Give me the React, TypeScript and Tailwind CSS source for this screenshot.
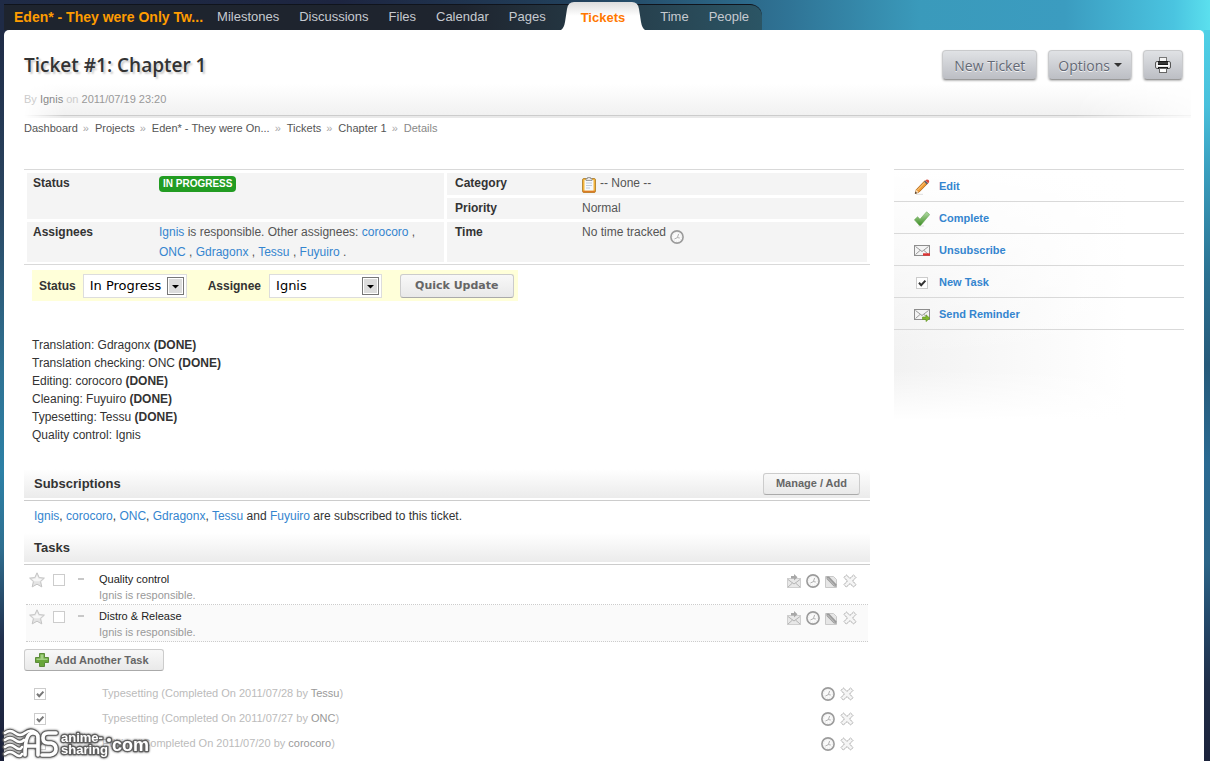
import { useState } from 'react';
import type { ReactNode } from 'react';

const NAV_BEFORE = ['Milestones', 'Discussions', 'Files', 'Calendar', 'Pages'];
const NAV_AFTER = ['Time', 'People'];

const CRUMBS = ['Dashboard', 'Projects', 'Eden* - They were On...', 'Tickets', 'Chapter 1'];

const PROGRESS = [
  { step: 'Translation', who: 'Gdragonx', done: true },
  { step: 'Translation checking', who: 'ONC', done: true },
  { step: 'Editing', who: 'corocoro', done: true },
  { step: 'Cleaning', who: 'Fuyuiro', done: true },
  { step: 'Typesetting', who: 'Tessu', done: true },
  { step: 'Quality control', who: 'Ignis', done: false },
];

const OPEN_TASKS = ['Quality control', 'Distro & Release'];

const COMPLETED_TASKS = [
  { name: 'Typesetting', date: '2011/07/28', by: 'Tessu' },
  { name: 'Typesetting', date: '2011/07/27', by: 'ONC' },
  { name: 'Editing', date: '2011/07/20', by: 'corocoro' },
];

/* ---------- Icons ---------- */

function ClockIcon() {
  return (
    <svg width="14" height="14" viewBox="0 0 14 14" className="block">
      <circle cx="7" cy="7" r="6.1" fill="#fafafa" stroke="#9b9b9b" strokeWidth="1.6" />
      <circle cx="7" cy="7" r="4.4" fill="none" stroke="#dcdcdc" strokeWidth=".8" strokeDasharray="1 1.3" />
      <path d="M8.6 4L7.4 7.6L4.4 9M7.4 7.6L9.8 8" fill="none" stroke="#b0b0b0" />
    </svg>
  );
}

function CrossIcon() {
  return (
    <svg width="14" height="14" viewBox="0 0 14 14" className="block">
      <path
        d="M3.4 1L7 4.4L10.6 1L13 3.4L9.6 7L13 10.6L10.6 13L7 9.6L3.4 13L1 10.6L4.4 7L1 3.4Z"
        fill="#f5f5f5"
        stroke="#a8a8a8"
        strokeWidth="1"
        strokeDasharray="2 .4"
        strokeLinejoin="round"
      />
    </svg>
  );
}

function InboxIcon() {
  return (
    <svg width="14" height="14" viewBox="0 0 14 14" className="block">
      <rect x=".5" y="4.5" width="13" height="9" fill="#e8e8e8" stroke="#cfcfcf" />
      <path d="M1 13L5.5 9M13 13L8.5 9M1 5.5L7 10L13 5.5" fill="none" stroke="#b5b5b5" />
      <path d="M4 2H7V0L10.5 3.2L7 6.5V4.5H4Z" fill="#a8a8a8" />
    </svg>
  );
}

function NoteIcon() {
  return (
    <svg width="13" height="13" viewBox="0 0 13 13" className="block">
      <path d="M.5 1.5H8.5L11.5 4.5V12.5H.5Z" fill="#e6e6e6" stroke="#c9c9c9" />
      <path d="M1.4 1.6L4 1.4L11.4 9.2L11.4 11.8L9 11.4L1.6 4Z" fill="#9a9a9a" />
      <path d="M2.6 3L9.8 10.6" stroke="#d0d0d0" strokeWidth=".8" />
    </svg>
  );
}

function StarIcon() {
  return (
    <svg width="16" height="16" viewBox="0 0 16 16" className="block">
      <path
        d="M8 .8L10.2 5.6L15.4 6.1L11.6 9.6L12.8 14.9L8 12.2L3.2 14.9L4.4 9.6L.6 6.1L5.8 5.6Z"
        fill="#e4e4e4"
        stroke="#c4c4c4"
      />
      <path d="M8 3.4L9.5 6.6L13 7L10.4 9.2H5.6L3 7L6.5 6.6Z" fill="#f7f7f7" />
    </svg>
  );
}

function PrinterIcon() {
  return (
    <svg width="16" height="16" viewBox="0 0 16 16" className="block">
      <rect x="4.5" y=".5" width="7" height="5" fill="#eee" stroke="#777" />
      <rect x=".5" y="4.5" width="15" height="7" rx="1.5" fill="#e8e8e8" stroke="#555" />
      <path d="M3 4H13V8H3Z" fill="#1a1a1a" />
      <path d="M5 1H11V4H5Z" fill="#f4f4f4" />
      <path d="M3 6H13" stroke="#555" />
      <path d="M2 8.5H14" stroke="#fff" />
      <path d="M3 10H13V12H3Z" fill="#1a1a1a" />
      <rect x="4.5" y="11.5" width="7" height="4" fill="#fff" stroke="#666" />
    </svg>
  );
}

function ClipboardIcon() {
  return (
    <svg width="14" height="16" viewBox="0 0 14 16" className="block">
      <rect x=".5" y="1.5" width="13" height="14" rx="1.5" fill="#f3b53c" stroke="#b98a3a" />
      <path d="M1 14.5H13" stroke="#dd7a26" strokeWidth="1.6" />
      <rect x="2.5" y="3" width="9" height="10.5" fill="#f6f9fd" />
      <path d="M4 6H10M4 8.5H10M4 11H8" stroke="#bccbdd" />
      <path d="M4 3.5V1.5H5.5V.5H8.5V1.5H10V3.5Z" fill="#e4e4e4" stroke="#8b8b8b" strokeWidth=".8" />
    </svg>
  );
}

function PencilIcon() {
  return (
    <svg width="16" height="16" viewBox="0 0 16 16" className="block">
      <path d="M2 15.3H9" stroke="#dedede" />
      <path d="M1.2 14.5L2.3 10.6L10.8 1.8L13.6 4.5L5 13.2Z" fill="#f09a32" stroke="#a8611c" strokeWidth=".8" />
      <path d="M3.5 11L11.4 3" stroke="#fbd08a" strokeWidth="1" />
      <path d="M1.2 14.5L2.3 10.8L4.8 13.2Z" fill="#f3d9b5" />
      <path d="M1 14.8L1.6 12.8L3 14.1Z" fill="#222" />
      <path d="M10 2.6L11.2 1.4L14 4.2L12.8 5.4Z" fill="#5b6470" />
      <path d="M11.3 1.4Q13 -.2 14.6 1.1Q15.9 2.6 14.1 4.2Z" fill="#d9483b" />
    </svg>
  );
}

function TickIcon() {
  return (
    <svg width="16" height="16" viewBox="0 0 16 16" className="block">
      <defs>
        <linearGradient id="tick" x1="0" y1="0" x2="0" y2="1">
          <stop offset="0" stopColor="#b4dba6" />
          <stop offset="1" stopColor="#3f8f26" />
        </linearGradient>
      </defs>
      <path d="M4 15H10" stroke="#ddd" />
      <path d="M.4 8.8L3.6 5.8L6 8.2L12.6 .8L15.7 3.6L6.6 14.4H5.4Z" fill="url(#tick)" stroke="#6aa658" strokeWidth=".6" />
    </svg>
  );
}

function EnvelopeIcon({ children }: { children: ReactNode }) {
  return (
    <svg width="16" height="14" viewBox="0 0 16 14" className="block">
      <rect x=".5" y="1.5" width="15" height="10" fill="#f4f4f4" stroke="#8d8d8d" />
      <path d="M1.5 2.5L8 7.5L14.5 2.5M1.5 10.5L6 6.5M14.5 10.5L10 6.5" fill="none" stroke="#9a9a9a" />
      {children}
    </svg>
  );
}

function PlusIcon() {
  return (
    <svg width="14" height="14" viewBox="0 0 14 14" className="block">
      <path
        d="M4.5 .5H9.5V4.5H13.5V9.5H9.5V13.5H4.5V9.5H.5V4.5H4.5Z"
        fill="#69a63a"
        stroke="#5c8a3a"
      />
      <path d="M5.5 1.5H8.5V5.5H12.5V7H1.5V5.5H5.5Z" fill="#a3cf83" />
    </svg>
  );
}

function Watermark() {
  return (
    <svg
      width="150"
      height="34"
      viewBox="0 0 150 34"
      role="img"
      aria-label="anime-sharing.com"
      className="pointer-events-none fixed bottom-0 left-0 [filter:drop-shadow(0_0_1px_#555)]"
    >
      {[
        { color: '#606060', width: 4.6 },
        { color: '#fff', width: 2.6 },
      ].map(({ color, width }) => (
        <g key={color} fill="none" stroke={color} strokeWidth={width} strokeLinecap="round" strokeLinejoin="round">
          <path d="M5 6Q10 2 15 6T25 6T35 5M5 13Q10 9 15 13T24 13M5 20Q10 16 15 20T22 20M5 27Q10 23 15 27T22 27" />
          <path strokeWidth={width + 1} d="M25 28Q25 7 32 6Q38 5 38 11V28M27 19H37" />
          <path strokeWidth={width + 1} d="M56 6H48Q43 6 43 11T48 16H51Q56 17 56 22T50 28H42" />
        </g>
      ))}
      <g
        fill="#fff"
        stroke="#606060"
        strokeWidth="2.6"
        strokeLinejoin="round"
        paintOrder="stroke"
        className="font-['Liberation_Sans',sans-serif] font-bold"
      >
        <text x="61" y="15" fontSize="13">anime-</text>
        <text x="61" y="27" fontSize="13">sharing</text>
        <circle cx="109" cy="13" r="2" />
        <text x="112" y="24" fontSize="18">com</text>
      </g>
    </svg>
  );
}

/* ---------- Small pieces ---------- */

function A({ children, className = 'text-[#3485cf]' }: { children: ReactNode; className?: string }) {
  return <a href="#" className={className}>{children}</a>;
}

function Checkbox({ label, checked = false, dark = false }: { label: string; checked?: boolean; dark?: boolean }) {
  return (
    <span className="relative block size-3">
      <input
        type="checkbox"
        aria-label={label}
        defaultChecked={checked}
        className="peer block size-3 appearance-none border border-[#ccc] bg-white"
      />
      <svg
        viewBox="0 0 12 12"
        className={`pointer-events-none absolute inset-0 hidden size-3 peer-checked:block ${dark ? 'text-[#333]' : 'text-[#777]'}`}
      >
        <path d="M3 5.8L5.2 8.2L9.4 3.6" fill="none" stroke="currentColor" strokeWidth="2" />
      </svg>
    </span>
  );
}

function Select({ id, options, className }: { id: string; options: string[]; className: string }) {
  const [value, setValue] = useState(options[0]);
  return (
    <span className="relative block">
      <select
        id={id}
        value={value}
        onChange={(e) => setValue(e.target.value)}
        className={`block h-6 appearance-none border border-[#ddd] bg-white pl-1.5 font-['DejaVu_Sans'] text-[13px] font-normal text-black ${className}`}
      >
        {options.map((option) => (
          <option key={option}>{option}</option>
        ))}
      </select>
      <svg width="17" height="18" viewBox="0 0 17 18" className="pointer-events-none absolute right-[3px] top-[3px]">
        <rect x=".5" y=".5" width="16" height="17" fill="#fff" stroke="#777" />
        <rect x="2" y="2" width="13" height="14" fill="#dcdcdc" />
        <path d="M5 8H12L8.5 11.5Z" fill="#000" />
      </svg>
    </span>
  );
}

const SMALL_BUTTON =
  'flex items-center rounded-[3px] border border-[#ccc] border-b-[#aaa] bg-linear-to-b from-[#f8f8f8] to-[#e9e9e9] font-bold text-[#666]';

const BIG_BUTTON =
  "flex h-[30px] items-center rounded-[4px] border border-[#c9cacc] border-b-[#999] bg-linear-to-b from-[#e0e2e5] to-[#bcbec4] font-['Open_Sans'] text-[14px] text-[#636874] [text-shadow:0_1px_0_#f2f3f5] shadow-[0_1px_2px_#bbb]";

function SectionBar({ title, children }: { title: string; children?: ReactNode }) {
  return (
    <div className="border-b border-[#ccc] pb-0.5">
      <div className="flex h-[29px] items-center justify-between bg-linear-to-b from-white to-[#ebebeb] px-2.5">
        <h2 className="text-[13px] font-bold text-[#333]">{title}</h2>
        {children}
      </div>
    </div>
  );
}

function Field({ label, className = '', children }: { label: string; className?: string; children: ReactNode }) {
  return (
    <div className={`flex bg-[#f4f4f4] ${className}`}>
      <dt className="shrink-0 font-bold text-[#333]">{label}</dt>
      <dd className="min-w-0 text-[#555]">{children}</dd>
    </div>
  );
}

/* ---------- Page sections ---------- */

function NavBar() {
  return (
    <nav className="ml-1 flex w-max items-center gap-5 rounded-tr-[12px] border-t border-[#10141c] bg-linear-to-r from-[#1e242e] from-60% to-[#2b5565] pr-[13px] pb-px pl-2.5 text-[13px] leading-6 text-[#c6cad0]">
      <A className="-mr-1.5 text-[14px] font-bold text-[#ff9c00]">Eden* - They were Only Tw...</A>
      {NAV_BEFORE.map((item) => (
        <A key={item} className="">{item}</A>
      ))}
      <a href="#" className="relative mx-[15px] pt-0.5 font-bold leading-[22px] text-[#ff7800]">
        <svg
          viewBox="0 0 84 28"
          preserveAspectRatio="none"
          className="absolute -top-[3px] -left-[20px] h-7 w-[84px]"
        >
          <defs>
            <linearGradient id="tab" x1="0" y1="0" x2="0" y2="1">
              <stop offset="0" stopColor="#dcdcdc" />
              <stop offset=".5" stopColor="#fff" />
            </linearGradient>
          </defs>
          <path d="M0 28Q3 26 4 20L6 7Q7 0 13 0H71Q77 0 78 7L80 20Q81 26 84 28Z" fill="url(#tab)" />
        </svg>
        <span className="relative">Tickets</span>
      </a>
      {NAV_AFTER.map((item) => (
        <A key={item} className="">{item}</A>
      ))}
    </nav>
  );
}

function PageHeader() {
  return (
    <header className="mr-[13px] ml-5">
      <div className="flex items-start justify-between pt-5 pr-2">
        <h1 className="font-['Open_Sans'] text-[19px] font-semibold leading-[30px] text-[#333] [text-shadow:2px_2px_2px_#ccc]">
          Ticket #1: Chapter 1
        </h1>
        <div className="flex gap-[11px]">
          <button type="button" className={`${BIG_BUTTON} px-[11px]`}>New Ticket</button>
          <button type="button" className={`${BIG_BUTTON} gap-1 px-[9px]`}>
            Options
            <svg width="8" height="4" viewBox="0 0 8 4"><path d="M0 0H8L4 4Z" fill="#333" /></svg>
          </button>
          <button type="button" aria-label="Print" className={`${BIG_BUTTON} px-[11px]`}>
            <PrinterIcon />
          </button>
        </div>
      </div>
      <div className="mt-1 [mask-image:linear-gradient(to_right,#0000_0,#000_40px,#000_90%,#0003_100%)]">
        <div className="h-[31px] bg-linear-to-b from-white to-[#f1f1f1]" />
        <div className="h-[3px] border-t border-[#ccc] bg-[#e9e9e9]" />
      </div>
      <p className="relative -mt-[27px] text-[11px] leading-4 text-[#ccc]">
        By <A className="text-[#888]">Ignis</A> on <span className="text-[#999]">2011/07/19 23:20</span>
      </p>
      <div className="mt-[13px] flex gap-[6px] text-[11px] leading-4 text-[#555]">
        {CRUMBS.map((crumb) => (
          <span key={crumb} className="flex gap-[5px]">
            <A className="">{crumb}</A>
            <span className="text-[#aaa]">»</span>
          </span>
        ))}
        <span className="text-[#888]">Details</span>
      </div>
    </header>
  );
}

function TicketDetails() {
  return (
    <dl className="grid grid-cols-[417fr_420fr] gap-[3px] border-y border-[#d9d9d9] px-[3px] pt-[3px] pb-0.5 text-[12px] leading-5">
      <Field label="Status" className="row-span-2 pl-1.5 [&>dt]:w-[126px]">
        <span className="mt-[3px] block rounded-[4px] bg-[#229c22] px-1 text-[10px] leading-4 font-bold text-white">
          IN PROGRESS
        </span>
      </Field>
      <Field label="Category" className="h-[22px] pl-2 [&>dt]:w-[127px]">
        <span className="flex gap-1">
          <span className="pt-1"><ClipboardIcon /></span>
          -- None --
        </span>
      </Field>
      <Field label="Priority" className="h-[21px] pl-2 [&>dt]:w-[127px]">Normal</Field>
      <Field label="Assignees" className="pl-1.5 [&>dt]:w-[126px]">
        <A>Ignis</A> is responsible. Other assignees: <A>corocoro</A> , <A>ONC</A> , <A>Gdragonx</A> , <A>Tessu</A> ,{' '}
        <A>Fuyuiro</A> .
      </Field>
      <Field label="Time" className="pl-2 [&>dt]:w-[127px]">
        <span className="flex gap-1">
          No time tracked
          <button type="button" aria-label="Track time" className="self-start pt-2"><ClockIcon /></button>
        </span>
      </Field>
    </dl>
  );
}

function QuickUpdate() {
  return (
    <form
      onSubmit={(e) => e.preventDefault()}
      className="mt-[5px] ml-2 flex h-[31px] w-max items-center bg-[#ffffd9] pr-1 pl-[7px] text-[12px] font-bold text-[#333]"
    >
      <label htmlFor="status" className="mr-[7px]">Status</label>
      <Select id="status" options={['In Progress', 'Open', 'Completed']} className="w-[104px]" />
      <label htmlFor="assignee" className="mr-2 ml-[21px]">Assignee</label>
      <Select id="assignee" options={['Ignis', 'corocoro', 'ONC', 'Gdragonx', 'Tessu', 'Fuyuiro']} className="w-[113px]" />
      <button type="submit" className={`${SMALL_BUTTON} ml-[18px] h-6 px-3.5 pt-0.5 font-['DejaVu_Sans'] text-[11px]`}>
        Quick Update
      </button>
    </form>
  );
}

function OpenTasks() {
  return (
    <ul className="mx-0.5 text-[11px] leading-4">
      {OPEN_TASKS.map((task) => (
        <li
          key={task}
          className="flex h-[37px] items-start border-b border-dotted border-[#ccc] pt-px pr-[11px] pl-[3px] first:h-10 first:pt-1 even:bg-[#fafafa]"
        >
          <button type="button" aria-label={`Star ${task}`} className="mt-[3px] mr-2"><StarIcon /></button>
          <span className="mt-[5px]"><Checkbox label={task} /></span>
          <span className="mt-[9px] ml-[13px] h-0.5 w-1.5 bg-[#c8c8c8]" />
          <div className="mt-0.5 ml-[15px] flex-1">
            <A className="block text-[#222]">{task}</A>
            <p className="text-[#999]">Ignis is responsible.</p>
          </div>
          <div className="mt-[5px] flex gap-[5px]">
            <button type="button" aria-label="Move"><InboxIcon /></button>
            <button type="button" aria-label="Track time"><ClockIcon /></button>
            <button type="button" aria-label="Edit"><NoteIcon /></button>
            <button type="button" aria-label="Delete"><CrossIcon /></button>
          </div>
        </li>
      ))}
    </ul>
  );
}

function CompletedTasks() {
  return (
    <ul className="mt-2.5 text-[11px] text-[#bbb]">
      {COMPLETED_TASKS.map((task) => (
        <li key={task.date} className="flex h-[25px] items-center pr-4 pl-2.5">
          <Checkbox label={`${task.name} ${task.date}`} checked />
          <p className="ml-14 flex-1">
            {task.name} (Completed On {task.date} by <A className="text-[#999]">{task.by}</A>)
          </p>
          <div className="flex gap-[5px]">
            <button type="button" aria-label="Track time"><ClockIcon /></button>
            <button type="button" aria-label="Delete"><CrossIcon /></button>
          </div>
        </li>
      ))}
    </ul>
  );
}

function Sidebar() {
  const actions = [
    { label: 'Edit', icon: <PencilIcon /> },
    { label: 'Complete', icon: <TickIcon /> },
    { label: 'Unsubscribe', icon: <EnvelopeIcon><path d="M9 10.5H16" stroke="#d33" strokeWidth="2.4" /></EnvelopeIcon> },
    { label: 'New Task', icon: <Checkbox label="New task" checked dark /> },
    {
      label: 'Send Reminder',
      icon: <EnvelopeIcon><path d="M8.5 9H12V6.8L15.8 10.2L12 13.6V11.5H8.5Z" fill="#7fb82e" stroke="#5e911c" strokeWidth=".6" /></EnvelopeIcon>,
    },
  ];
  return (
    <aside className="h-[251px] w-[290px] shrink-0 border-t border-[#d9d9d9] bg-[linear-gradient(to_bottom,#fff_0,#fff0_75%,#fff0_80%,#fff_100%),linear-gradient(to_right,#f2f2f2,#fff_80%)]">
      <ul className="text-[11px] font-bold">
        {actions.map(({ label, icon }) => (
          <li key={label} className="flex h-8 items-center gap-[9px] border-b border-[#d9d9d9] pt-0.5 pl-5">
            <span className="flex w-4 justify-center">{icon}</span>
            <A>{label}</A>
          </li>
        ))}
      </ul>
    </aside>
  );
}

export default function App() {
  return (
    <div className="flex min-h-screen flex-col bg-[linear-gradient(to_bottom,#1f2b46_0,#2a4560_22%,#2f7394_45%,#2c80a6_58%,#2f6f90_68%,#22304d_80%,#181c34_100%),linear-gradient(to_bottom,#4fd0e6_0,#49c0dc_10%,#3aa0c0_18%,#2b7292_32%,#265a7a_44%,#2a6a92_57%,#2b6487_70%,#244a6c_77%,#202e48_86%,#1a1e36_100%),linear-gradient(to_right,#1f2b46_0,#1d2540_28%,#22415c_48%,#2f7395_65%,#3a9abb_76%,#3b9cc0_88%,#4ac4e0_97%,#5be0ee_100%)] bg-[size:4px_100%,6px_100%,100%_60px] bg-[position:0_30px,100%_30px,0_0] bg-no-repeat pt-1 font-['Liberation_Sans',sans-serif]">
      <NavBar />
      <div className="mr-1.5 ml-1 flex-1 rounded-t-[5px] bg-white">
        <PageHeader />
        <div className="mt-[33px] mr-5 ml-5 flex items-start gap-6">
          <main className="min-w-0 flex-1">
            <TicketDetails />
            <QuickUpdate />
            <div className="mt-[35px] ml-2 text-[12px] leading-[18px] text-[#333]">
              {PROGRESS.map(({ step, who, done }) => (
                <p key={step}>
                  {step}: {who} {done && <b>(DONE)</b>}
                </p>
              ))}
            </div>
            <div className="mt-[25px]">
              <SectionBar title="Subscriptions">
                <button type="button" className={`${SMALL_BUTTON} h-[22px] px-3 text-[11px]`}>Manage / Add</button>
              </SectionBar>
            </div>
            <p className="pt-1.5 pb-2 pl-2.5 text-[12px] leading-[18px] text-[#333]">
              <A>Ignis</A>, <A>corocoro</A>, <A>ONC</A>, <A>Gdragonx</A>, <A>Tessu</A> and <A>Fuyuiro</A> are subscribed
              to this ticket.
            </p>
            <SectionBar title="Tasks" />
            <OpenTasks />
            <button type="button" className={`${SMALL_BUTTON} mt-[7px] h-[22px] gap-[6px] pr-3.5 pl-2.5 text-[11px]`}>
              <PlusIcon />
              Add Another Task
            </button>
            <CompletedTasks />
          </main>
          <Sidebar />
        </div>
      </div>
      <Watermark />
    </div>
  );
}
